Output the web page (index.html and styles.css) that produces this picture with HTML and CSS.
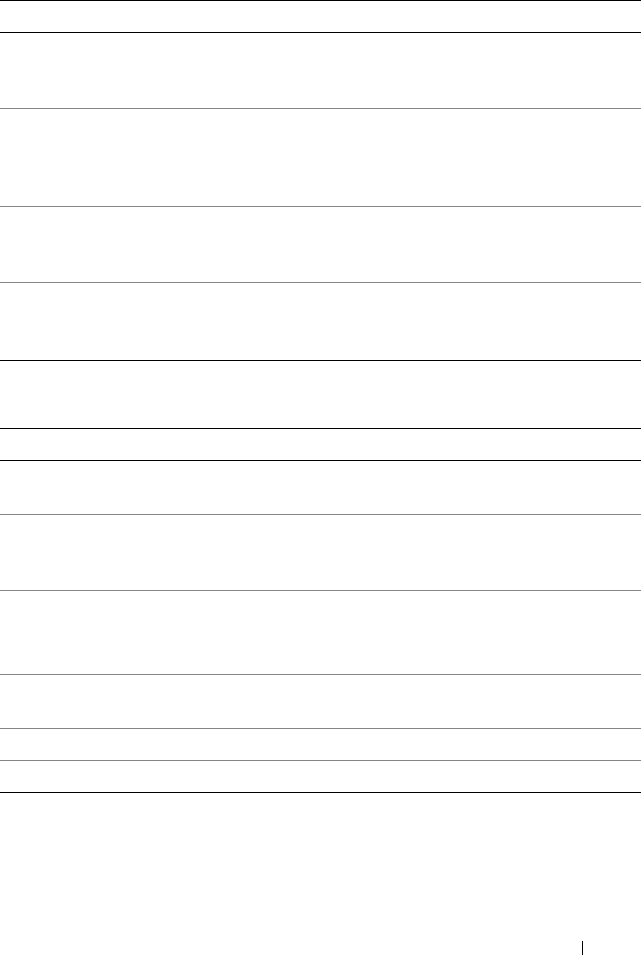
FILE: index.html
```html
<!DOCTYPE html>
<html lang="en">
<head>
<meta charset="utf-8">
<title>Table page</title>
<link rel="stylesheet" href="styles.css">
</head>
<body>
<div class="page">
  <div class="table">
    <div class="row h32 dark"></div>
    <div class="row h76"></div>
    <div class="row h98"></div>
    <div class="row h76"></div>
    <div class="row h78 dark"></div>
    <div class="row h68 dark"></div>
    <div class="row h32 dark"></div>
    <div class="row h54"></div>
    <div class="row h76"></div>
    <div class="row h84"></div>
    <div class="row h54"></div>
    <div class="row h32"></div>
    <div class="row h32 dark"></div>
  </div>
  <div class="footer">
    <span class="page-bar"></span>
  </div>
</div>
</body>
</html>
```
FILE: styles.css
```css
html, body {
  margin: 0;
  padding: 0;
  background: #ffffff;
  font-family: "Liberation Sans", Arial, sans-serif;
}
.page {
  width: 641px;
  height: 955px;
  display: flex;
  flex-direction: column;
}
.table {
  display: flex;
  flex-direction: column;
  border-top: 1px solid #000000;
}
.row {
  box-sizing: border-box;
  border-bottom: 1px solid #858585;
}
.row.dark {
  border-bottom-color: #000000;
}
.h32 { height: 32px; }
.h54 { height: 54px; }
.h68 { height: 68px; }
.h76 { height: 76px; }
.h78 { height: 78px; }
.h84 { height: 84px; }
.h98 { height: 98px; }
.footer {
  margin-top: auto;
  display: flex;
  justify-content: flex-end;
  padding-right: 58px;
}
.page-bar {
  display: block;
  width: 1px;
  height: 14px;
  background: #000000;
}
```
